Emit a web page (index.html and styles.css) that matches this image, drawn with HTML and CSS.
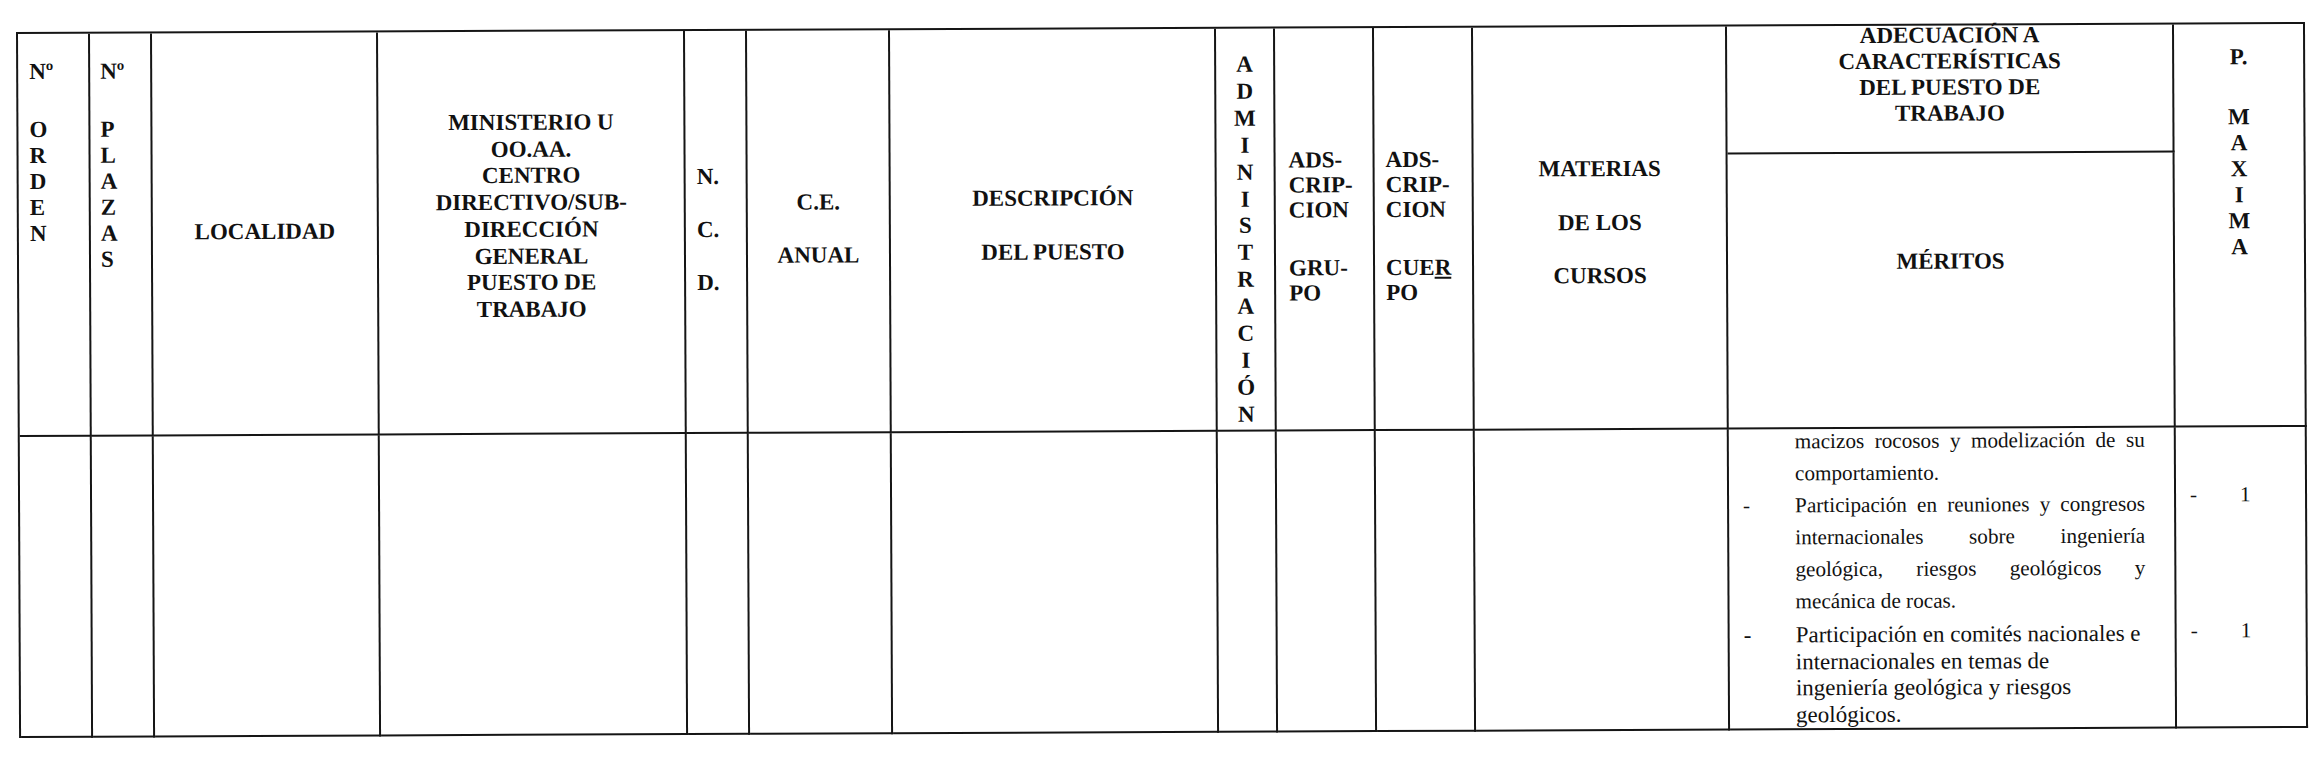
FILE: index.html
```html
<!DOCTYPE html>
<html lang="es">
<head>
<meta charset="utf-8">
<title>Puestos de trabajo - méritos</title>
<link rel="stylesheet" href="styles.css">
</head>
<body>
<div class="sheet">
  <div class="c hd span orden">
    <div>Nº</div>
    <div class="stack-gap">O<br>R<br>D<br>E<br>N</div>
  </div>
  <div class="c hd span plazas">
    <div>Nº</div>
    <div class="stack-gap">P<br>L<br>A<br>Z<br>A<br>S</div>
  </div>
  <div class="c hd span localidad">LOCALIDAD</div>
  <div class="c hd span ministerio">MINISTERIO U<br>OO.AA.<br>CENTRO<br>DIRECTIVO/SUB-<br>DIRECCIÓN<br>GENERAL<br>PUESTO DE<br>TRABAJO</div>
  <div class="c hd span ncd">N.<br><br>C.<br><br>D.</div>
  <div class="c hd span ce">C.E.<br><br>ANUAL</div>
  <div class="c hd span desc">DESCRIPCIÓN<br><br>DEL PUESTO</div>
  <div class="c hd span admin">A<br>D<br>M<br>I<br>N<br>I<br>S<br>T<br>R<br>A<br>C<br>I<br>Ó<br>N</div>
  <div class="c hd span ads grupo">
    <div class="ads-top">ADS-<br>CRIP-<br>CION</div>
    <div>GRU-<br>PO</div>
  </div>
  <div class="c hd span ads cuerpo">
    <div class="ads-top">ADS-<br>CRIP-<br>CION</div>
    <div>CUE<u>R</u><br>PO</div>
  </div>
  <div class="c hd span materias">MATERIAS<br><br>DE LOS<br><br>CURSOS</div>
  <div class="c hd adec">
    <div class="adec-in">ADECUACIÓN A<br>CARACTERÍSTICAS<br>DEL PUESTO DE<br>TRABAJO</div>
  </div>
  <div class="c hd span pmax">
    <div>P.</div>
    <div class="stack-gap">M<br>A<br>X<br>I<br>M<br>A</div>
  </div>
  <div class="c hd meritos-h">MÉRITOS</div>

  <div class="c"></div>
  <div class="c"></div>
  <div class="c"></div>
  <div class="c"></div>
  <div class="c"></div>
  <div class="c"></div>
  <div class="c"></div>
  <div class="c"></div>
  <div class="c"></div>
  <div class="c"></div>
  <div class="c"></div>
  <div class="c meritos">
    <div class="item small cont">
      <span class="mark"></span>
      <div class="txt"><span class="jl">macizos rocosos y modelización de su</span><span class="ll">comportamiento.</span></div>
    </div>
    <div class="item small">
      <span class="mark">-</span>
      <div class="txt"><span class="jl">Participación en reuniones y congresos</span><span class="jl">internacionales sobre ingeniería</span><span class="jl">geológica, riesgos geológicos y</span><span class="ll">mecánica de rocas.</span></div>
    </div>
    <div class="item big">
      <span class="mark">-</span>
      <div class="txt nw">Participación en comités nacionales e<br>internacionales en temas de<br>ingeniería geológica y riesgos<br>geológicos.</div>
    </div>
  </div>
  <div class="c puntos">
    <div class="pt"><span class="mark2">-</span><span>1</span></div>
    <div class="pt"><span class="mark2">-</span><span>1</span></div>
  </div>
</div>
</body>
</html>
```

FILE: styles.css
```css
* { box-sizing: border-box; }
html, body { margin: 0; padding: 0; background: #ffffff; }
body {
  width: 2319px;
  height: 780px;
  overflow: hidden;
  font-family: "Liberation Serif", "Times New Roman", serif;
  color: #111111;
}

.sheet {
  display: grid;
  grid-template-columns: 72px 62px 226px 307px 62px 143px 326px 59px 99px 99px 254px 447px 131px;
  grid-template-rows: 127.5px 275.5px 301px;
  width: max-content;
  margin: 32px 0 0 16px;
  border-left: 2px solid #151515;
  border-top: 2px solid #151515;
  transform: rotate(-0.25deg);
  transform-origin: 0 0;
}

.c {
  border-right: 2px solid #151515;
  border-bottom: 2px solid #151515;
  min-width: 0;
}

.hd { font-weight: bold; font-size: 23px; line-height: 26.5px; }
.span { grid-row: 1 / span 2; }

.orden { padding: 25px 0 0 11px; line-height: 26px; }
.plazas { padding: 25px 0 0 10px; line-height: 26px; }
.stack-gap { margin-top: 32px; }

.localidad { padding-top: 186px; text-align: center; }
.ministerio { padding-top: 78px; text-align: center; line-height: 26.7px; }
.ncd { padding: 133px 0 0 11px; }
.ce { padding-top: 159px; text-align: center; }
.desc { padding-top: 155px; text-align: center; line-height: 27px; }
.admin { padding-top: 23px; text-align: center; line-height: 26.9px; }
.ads { padding-top: 119px; line-height: 25px; }
.grupo { padding-left: 13px; }
.cuerpo { padding-left: 11px; }
.ads-top { margin-bottom: 33px; }
.materias { padding-top: 129px; text-align: center; line-height: 26.75px; }

.adec { grid-column: 12; grid-row: 1; text-align: center; line-height: 26px; }
.adec-in { margin-top: -3px; }

.pmax { grid-column: 13; text-align: center; padding-top: 20px; line-height: 26px; }
.pmax .stack-gap { margin-top: 34px; }

.meritos-h { grid-column: 12; grid-row: 2; padding-top: 95px; text-align: center; }

/* body row */
.meritos { padding: 0 29px 0 14px; }
.item { display: flex; }
.mark { flex: 0 0 52px; }
.txt { flex: 1 1 auto; min-width: 0; }
.nw { white-space: nowrap; }
.small { font-size: 21.2px; line-height: 32px; }
.cont { margin-top: -4px; }
.big { font-size: 23px; line-height: 26.5px; margin-top: 5px; }
.jl { display: block; text-align: justify; text-align-last: justify; }
.ll { display: block; text-align: left; }

.puntos { padding: 51px 0 0 14px; font-size: 21.2px; line-height: 32px; }
.pt { display: flex; }
.mark2 { flex: 0 0 50px; }
.pt + .pt { margin-top: 103.5px; }
```
